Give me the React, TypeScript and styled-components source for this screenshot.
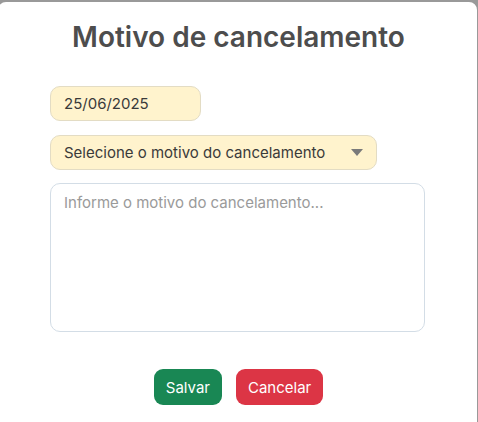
import React from "react";
import styled, { createGlobalStyle } from "styled-components";

const Global = createGlobalStyle`
  html, body { margin: 0; padding: 0; background: #999999; overflow: hidden; }
  body { font-family: Inter, "Liberation Sans", sans-serif; }
  * { box-sizing: border-box; }
`;

const Modal = styled.div`
  margin: 2px 1px 0 -2px;
  width: 479px;
  height: 440px;
  background: #ffffff;
  border-radius: 8px;
  display: flex;
  flex-direction: column;
  align-items: center;
  padding-top: 18px;
`;

const Title = styled.h2`
  margin: 0;
  padding-left: 2px;
  font-size: 28px;
  font-weight: 600;
  color: #4d4d4d;
  line-height: 34px;
`;

const Form = styled.div`
  width: 375px;
  margin-top: 32px;
  display: flex;
  flex-direction: column;
  align-items: flex-start;
`;

const Field = styled.div<{ $w: number }>`
  width: ${(p) => p.$w}px;
  height: 35px;
  margin-bottom: 14px;
  background: #fff3cd;
  border: 1px solid #e3dcc4;
  border-radius: 10px;
  padding: 0 13px;
  display: flex;
  align-items: center;
  justify-content: space-between;
  font-size: 15px;
  color: #3a3a3a;
`;

const Caret = styled.span`
  width: 0;
  height: 0;
  border-left: 6px solid transparent;
  border-right: 6px solid transparent;
  border-top: 7px solid #7a7a7a;
`;

const TextArea = styled.div`
  width: 375px;
  height: 149px;
  margin-top: -1px;
  border: 1px solid #d3dde6;
  border-radius: 10px;
  padding: 9px 13px;
  font-size: 15px;
  color: #9a9a9a;
`;

const Actions = styled.div`
  margin-top: 37px;
  padding-left: 2px;
  display: flex;
  gap: 14px;
`;

const Button = styled.button<{ $bg: string }>`
  height: 36px;
  padding: 0 12px;
  border: none;
  border-radius: 9px;
  background: ${(p) => p.$bg};
  color: #ffffff;
  font-family: Inter, "Liberation Sans", sans-serif;
  font-size: 15px;
`;

export default function App() {
  return (
    <>
      <Global />
      <Modal>
        <Title>Motivo de cancelamento</Title>
        <Form>
          <Field $w={151}>25/06/2025</Field>
          <Field $w={327}>
            Selecione o motivo do cancelamento
            <Caret />
          </Field>
          <TextArea>Informe o motivo do cancelamento...</TextArea>
        </Form>
        <Actions>
          <Button $bg="#198754">Salvar</Button>
          <Button $bg="#dc3545">Cancelar</Button>
        </Actions>
      </Modal>
    </>
  );
}
